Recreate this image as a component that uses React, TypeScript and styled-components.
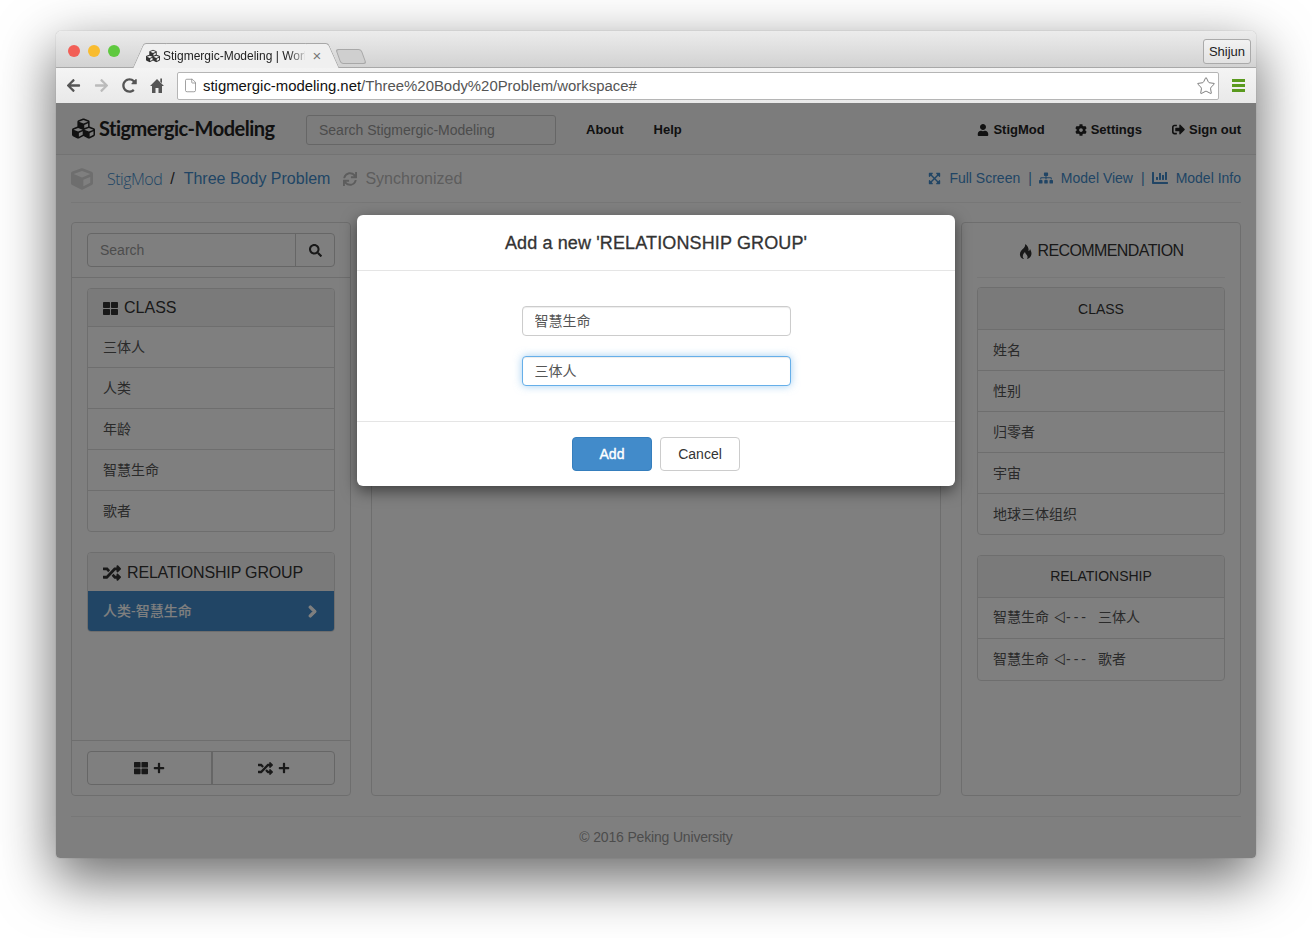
import {FC, ReactNode} from 'react';
import {createGlobalStyle, styled} from 'styled-components';
import {File as FileIcon, Star} from 'lucide-react';
import {
  FaArrowLeft,
  FaArrowRight,
  FaChartBar,
  FaChevronRight,
  FaCog,
  FaCube,
  FaCubes,
  FaExpandArrowsAlt,
  FaPlus,
  FaRandom,
  FaRedoAlt,
  FaSearch,
  FaSignOutAlt,
  FaSitemap,
  FaSync,
  FaThLarge,
  FaUser,
} from 'react-icons/fa';

const sans = `"Liberation Sans", "Noto Sans CJK SC", sans-serif`;
const primary = '#428bca';
const border = '#ddd';

const GlobalStyle = createGlobalStyle`
  html, body {
    margin: 0;
    padding: 0;
    height: 938px;
    overflow: hidden;
    background: #fff;
  }
  body {
    font-family: ${sans};
    font-size: 14px;
    line-height: 20px;
    color: #333;
  }
  * {
    box-sizing: border-box;
  }
`;

const classes = ['三体人', '人类', '年龄', '智慧生命', '歌者'];
const recommended = ['姓名', '性别', '归零者', '宇宙', '地球三体组织'];
const relationships = ['三体人', '歌者'];

const NavLink: FC<{icon?: ReactNode; children: ReactNode}> = ({icon, children}) => (
  <NavItem>
    {icon}
    {children}
  </NavItem>
);

const HomeIcon: FC = () => (
  <svg width="14" height="15" viewBox="0 0 14 15" fill="#555">
    <path d="M7 1 14 8H12V15H8.5V10H5.5V15H2V8H0Z" />
    <path d="M10.3 0.5H12V5.2L10.3 3.5Z" />
  </svg>
);

const FlameIcon: FC = () => (
  <svg width="13" height="15" viewBox="0 0 13 15" fill="currentColor">
    <path d="M6 0C7 3 3.5 5 2 7C.5 9 .5 12 2.5 14C3.5 15 5 15 5 15C3 13 3.5 10.5 6 8C6.3 10 8 10.5 8.5 12.5C8.8 13.5 8 15 8 15C10 14.5 12.5 13 12.5 9.5C12.5 7.5 11.5 6 11 5C10.8 6.5 10 7 9.5 7C10 4 8.5 1.5 6 0Z" />
  </svg>
);

const App: FC = () => (
  <>
    <GlobalStyle />
    <Browser>
      <TitleBar>
        <Lights>
          <Light $color="#f25f57" />
          <Light $color="#f9bc2f" />
          <Light $color="#5fc93f" />
        </Lights>
        <Tab>
          <FaCubes size={14} color="#333" />
          <TabTitle>Stigmergic-Modeling | Worl</TabTitle>
          <TabClose>×</TabClose>
        </Tab>
        <NewTab />
        <Profile>Shijun</Profile>
      </TitleBar>
      <ToolBar>
        <ChromeIcon>
          <FaArrowLeft size={15} color="#555" />
        </ChromeIcon>
        <ChromeIcon>
          <FaArrowRight size={15} color="#bbb" />
        </ChromeIcon>
        <ChromeIcon>
          <FaRedoAlt size={15} color="#555" />
        </ChromeIcon>
        <ChromeIcon>
          <HomeIcon />
        </ChromeIcon>
        <Omnibox>
          <FileIcon size={15} strokeWidth={1.25} color="#888" />
          <Url>
            <strong>stigmergic-modeling.net</strong>/Three%20Body%20Problem/workspace#
          </Url>
          <Star size={20} strokeWidth={1} color="#666" />
        </Omnibox>
        <Hamburger>
          <span />
          <span />
          <span />
        </Hamburger>
      </ToolBar>
      <Page>
        <Navbar>
          <Brand>
            <FaCubes size={23} />
            Stigmergic-Modeling
          </Brand>
          <NavSearch placeholder="Search Stigmergic-Modeling" readOnly />
          <NavLinks>
            <NavLink>About</NavLink>
            <NavLink>Help</NavLink>
          </NavLinks>
          <NavRight>
            <NavLink icon={<FaUser size={12} />}>StigMod</NavLink>
            <NavLink icon={<FaCog size={12} />}>Settings</NavLink>
            <NavLink icon={<FaSignOutAlt size={13} />}>Sign out</NavLink>
          </NavRight>
        </Navbar>
        <Container>
          <Crumbs>
            <CrumbLeft>
              <FaCube size={22} color="#ddd" />
              <CrumbRoot>StigMod</CrumbRoot>
              <CrumbSep>/</CrumbSep>
              <CrumbLink>Three Body Problem</CrumbLink>
              <Sync>
                <FaSync size={14} />
                Synchronized
              </Sync>
            </CrumbLeft>
            <CrumbRight>
              <FaExpandArrowsAlt size={13} />
              <ViewLink>Full Screen</ViewLink>
              <Bar>|</Bar>
              <FaSitemap size={14} />
              <ViewLink>Model View</ViewLink>
              <Bar>|</Bar>
              <FaChartBar size={16} />
              <ViewLink>Model Info</ViewLink>
            </CrumbRight>
          </Crumbs>
          <Columns>
            <Column>
              <SearchRow>
                <SearchGroup>
                  <SearchInput placeholder="Search" readOnly />
                  <SearchButton>
                    <FaSearch size={13} />
                  </SearchButton>
                </SearchGroup>
              </SearchRow>
              <Lists>
                <ListPanel>
                  <ListHeading $height={37}>
                    <FaThLarge size={15} />
                    CLASS
                  </ListHeading>
                  {classes.map(c => (
                    <ListItem key={c}>{c}</ListItem>
                  ))}
                </ListPanel>
                <ListPanel>
                  <ListHeading $height={38}>
                    <FaRandom size={18} />
                    <GroupTitle>RELATIONSHIP GROUP</GroupTitle>
                  </ListHeading>
                  <ActiveItem>
                    人类-智慧生命
                    <FaChevronRight size={13} stroke="currentColor" strokeWidth={50} />
                  </ActiveItem>
                </ListPanel>
              </Lists>
              <AddRow>
                <AddGroup>
                  <AddButton>
                    <FaThLarge size={14} />
                    <FaPlus size={12} />
                  </AddButton>
                  <AddButton>
                    <FaRandom size={15} />
                    <FaPlus size={12} />
                  </AddButton>
                </AddGroup>
              </AddRow>
            </Column>
            <Column />
            <Column>
              <RecommendTitle>
                <FlameIcon />
                <RecommendText>RECOMMENDATION</RecommendText>
              </RecommendTitle>
              <Lists $top={9}>
                <ListPanel>
                  <CenterHeading>CLASS</CenterHeading>
                  {recommended.map(c => (
                    <ListItem key={c}>{c}</ListItem>
                  ))}
                </ListPanel>
                <ListPanel>
                  <CenterHeading $lift>RELATIONSHIP</CenterHeading>
                  {relationships.map((r, i) => (
                    <RelationItem key={r} $first={i === 0}>
                      智慧生命
                      <Arrow>
                        <ArrowHead>◁</ArrowHead>---
                      </Arrow>
                      {r}
                    </RelationItem>
                  ))}
                </ListPanel>
              </Lists>
            </Column>
          </Columns>
          <Footer>© 2016 Peking University</Footer>
        </Container>
        <Backdrop>
          <Modal>
            <ModalHeader>Add a new 'RELATIONSHIP GROUP'</ModalHeader>
            <ModalBody>
              <ModalInput defaultValue="智慧生命" readOnly />
              <ModalInput defaultValue="三体人" readOnly $focused />
            </ModalBody>
            <ModalFooter>
              <AddAction>Add</AddAction>
              <CancelAction>Cancel</CancelAction>
            </ModalFooter>
          </Modal>
        </Backdrop>
      </Page>
    </Browser>
  </>
);
App.displayName = 'App';
export default App;

const Browser = styled.div`
  display: flex;
  flex-direction: column;
  width: 1200px;
  height: 827px;
  margin: 31px 0 0 56px;
  border-radius: 5px 5px 4px 4px;
  overflow: hidden;
  box-shadow: 0 20px 55px 2px rgba(0, 0, 0, 0.58), 0 0 1px rgba(0, 0, 0, 0.4);
`;

const TitleBar = styled.div`
  display: flex;
  align-items: flex-end;
  height: 37px;
  flex-shrink: 0;
  padding-left: 12px;
  background: linear-gradient(#ececec, #d2d2d2);
  border-bottom: 1px solid #a8a8a8;
`;

const Lights = styled.div`
  display: flex;
  gap: 8px;
  align-self: flex-start;
  margin-top: 14px;
`;

const Light = styled.span<{$color: string}>`
  width: 12px;
  height: 12px;
  border-radius: 50%;
  background: ${p => p.$color};
`;

const Tab = styled.div`
  position: relative;
  display: flex;
  align-items: center;
  gap: 3px;
  width: 180px;
  height: 25px;
  margin: 0 0 -1px 26px;
  padding: 0 3px 0 0;
  font-size: 12px;
  color: #222;
  z-index: 0;
  background: #f0f0f0;
  border-top: 1px solid #a8a8a8;
  &::before,
  &::after {
    content: '';
    position: absolute;
    top: -1px;
    bottom: 0;
    width: 22px;
    background: #f0f0f0;
    border-top: 1px solid #a8a8a8;
    z-index: -1;
  }
  &::before {
    left: -8px;
    transform: skewX(-24deg);
    border-left: 1px solid #a8a8a8;
    border-radius: 3px 0 0 0;
  }
  &::after {
    right: -8px;
    transform: skewX(24deg);
    border-right: 1px solid #a8a8a8;
    border-radius: 0 3px 0 0;
  }
  svg {
    flex-shrink: 0;
  }
`;

const TabTitle = styled.span`
  flex: 1;
  min-width: 0;
  white-space: nowrap;
  -webkit-mask-image: linear-gradient(to right, #000 88%, rgba(0, 0, 0, 0.2) 100%);
  mask-image: linear-gradient(to right, #000 88%, rgba(0, 0, 0, 0.2) 100%);
`;

const TabClose = styled.span`
  width: 12px;
  margin-left: 3px;
  font-size: 15px;
  color: #777;
  text-align: center;
`;

const NewTab = styled.div`
  width: 26px;
  height: 15px;
  margin: 0 0 3px 12px;
  background: #cfcfcf;
  border: 1px solid #a8a8a8;
  border-radius: 3px;
  transform: skewX(20deg);
`;

const Profile = styled.div`
  align-self: flex-start;
  display: flex;
  align-items: center;
  justify-content: center;
  width: 48px;
  height: 25px;
  margin: 8px 5px 0 auto;
  font-size: 13px;
  color: #222;
  border: 1px solid #aaa;
  border-radius: 3px;
  background: linear-gradient(#f2f2f2, #e2e2e2);
`;

const ToolBar = styled.div`
  display: flex;
  align-items: center;
  height: 35px;
  flex-shrink: 0;
  padding: 0 11px 0 3px;
  background: linear-gradient(#f4f4f4, #e9e9e9);
`;

const ChromeIcon = styled.div`
  display: flex;
  align-items: center;
  justify-content: center;
  width: 28px;
  height: 28px;
`;

const Omnibox = styled.div`
  display: flex;
  align-items: center;
  flex: 1;
  height: 28px;
  margin: 0 13px 0 6px;
  padding: 0 2px 0 5px;
  background: #fff;
  border: 1px solid #b5b5b5;
  border-radius: 2px;
`;

const Url = styled.div`
  flex: 1;
  margin-left: 5px;
  font-size: 14.9px;
  color: #555;
  white-space: nowrap;
  strong {
    font-weight: 400;
    color: #111;
  }
`;

const Hamburger = styled.div`
  display: flex;
  flex-direction: column;
  gap: 2px;
  width: 13px;
  span {
    height: 3px;
    background: #5a9a1e;
  }
`;

const Page = styled.div`
  position: relative;
  flex: 1;
  background: #fff;
  overflow: hidden;
`;

const Navbar = styled.div`
  display: flex;
  align-items: center;
  height: 52px;
  padding: 2px 15px 0 16px;
  background: #f8f8f8;
  border-bottom: 1px solid #e7e7e7;
`;

const Brand = styled.div`
  display: flex;
  align-items: center;
  gap: 4px;
  width: 234px;
  padding-bottom: 3px;
  font-family: Lato, sans-serif;
  font-size: 20px;
  font-weight: 700;
  letter-spacing: -0.5px;
  color: #222;
`;

const NavSearch = styled.input`
  width: 250px;
  height: 30px;
  padding: 0 12px;
  font-family: ${sans};
  font-size: 14px;
  background: #f8f8f8;
  border: 1px solid #ccc;
  border-radius: 3px;
  outline: none;
  &::placeholder {
    color: #999;
  }
`;

const NavLinks = styled.div`
  display: flex;
  gap: 30px;
  margin-left: 30px;
`;

const NavRight = styled.div`
  display: flex;
  gap: 30px;
  margin-left: auto;
`;

const NavItem = styled.div`
  display: flex;
  align-items: center;
  gap: 4px;
  font-size: 13px;
  font-weight: 700;
  color: #222;
`;

const Container = styled.div`
  padding: 0 15px;
`;

const Crumbs = styled.div`
  display: flex;
  align-items: center;
  justify-content: space-between;
  height: 48px;
  padding-top: 1px;
  border-bottom: 1px solid #eee;
`;

const CrumbLeft = styled.div`
  display: flex;
  align-items: center;
  font-size: 16px;
`;

const CrumbRoot = styled.span`
  margin-left: 14px;
  font-family: "Open Sans", sans-serif;
  font-weight: 300;
  letter-spacing: -0.5px;
  color: ${primary};
`;

const CrumbSep = styled.span`
  margin: 0 8px;
  color: #333;
`;

const CrumbLink = styled.span`
  margin-left: 1px;
  color: ${primary};
`;

const Sync = styled.span`
  display: flex;
  align-items: center;
  gap: 8px;
  margin-left: 13px;
  color: #bbb;
`;

const CrumbRight = styled.div`
  display: flex;
  align-items: center;
  gap: 7px;
  padding-bottom: 2px;
  color: ${primary};
`;

const ViewLink = styled.span`
  margin-left: 1px;
  color: ${primary};
`;

const Bar = styled.span`
  margin: 0 0 0 1px;
  color: ${primary};
`;

const Columns = styled.div`
  display: grid;
  grid-template-columns: 280px 570px 280px;
  gap: 20px;
  height: 574px;
  margin-top: 19px;
`;

const Column = styled.div`
  display: flex;
  flex-direction: column;
  border: 1px solid ${border};
  border-radius: 4px;
`;

const SearchRow = styled.div`
  height: 55px;
  flex-shrink: 0;
  padding: 10px 15px;
  border-bottom: 1px solid ${border};
`;

const SearchGroup = styled.div`
  display: flex;
  height: 34px;
  border: 1px solid #ccc;
  border-radius: 4px;
`;

const SearchInput = styled.input`
  flex: 1;
  min-width: 0;
  padding: 0 12px;
  font-family: ${sans};
  font-size: 14px;
  background: transparent;
  border: 0;
  outline: none;
  &::placeholder {
    color: #999;
  }
`;

const SearchButton = styled.div`
  display: flex;
  align-items: center;
  justify-content: center;
  width: 39px;
  border-left: 1px solid #ccc;
  color: #333;
`;

const Lists = styled.div<{$top?: number}>`
  display: flex;
  flex-direction: column;
  flex: 1;
  gap: 20px;
  padding: ${p => p.$top ?? 10}px 15px 0;
`;

const ListPanel = styled.div`
  border: 1px solid ${border};
  border-radius: 4px;
  overflow: hidden;
`;

const ListHeading = styled.div<{$height: number}>`
  display: flex;
  align-items: center;
  gap: 6px;
  height: ${p => p.$height}px;
  padding: 1px 15px 0;
  font-size: 16px;
  color: #333;
  background: #f5f5f5;
`;

const GroupTitle = styled.span`
  letter-spacing: -0.17px;
`;

const CenterHeading = styled.div<{$lift?: boolean}>`
  display: flex;
  align-items: center;
  justify-content: center;
  height: 41px;
  padding-bottom: ${p => (p.$lift ? 2 : 0)}px;
  color: #333;
  background: #f5f5f5;
`;

const ListItem = styled.div`
  height: 41px;
  padding: 10px 15px;
  color: #555;
  border-top: 1px solid ${border};
`;

const RelationItem = styled(ListItem)<{$first: boolean}>`
  height: ${p => (p.$first ? 41 : 42)}px;
  padding-top: ${p => (p.$first ? 9 : 10)}px;
`;

const ActiveItem = styled.div`
  display: flex;
  align-items: center;
  justify-content: space-between;
  height: 40px;
  padding: 0 15px;
  font-weight: 500;
  color: #fff;
  background: ${primary};
`;

const Arrow = styled.span`
  margin: 0 9px 0 5px;
  letter-spacing: 3px;
`;

const ArrowHead = styled.span`
  font-size: 12px;
  letter-spacing: 0;
  -webkit-text-stroke: 0.3px #555;
`;

const AddRow = styled.div`
  height: 55px;
  flex-shrink: 0;
  padding: 10px 15px;
  border-top: 1px solid ${border};
`;

const AddGroup = styled.div`
  display: grid;
  grid-template-columns: 1fr 1fr;
  height: 34px;
  border: 1px solid #ccc;
  border-radius: 4px;
`;

const AddButton = styled.div`
  display: flex;
  align-items: center;
  justify-content: center;
  gap: 5px;
  color: #333;
  & + & {
    border-left: 2px solid #ccc;
  }
`;

const RecommendTitle = styled.div`
  display: flex;
  align-items: center;
  justify-content: center;
  gap: 6px;
  height: 55px;
  flex-shrink: 0;
  margin: 0 15px;
  padding-top: 2px;
  font-size: 16px;
  color: #333;
  border-bottom: 1px solid #eee;
`;

const RecommendText = styled.span`
  letter-spacing: -0.6px;
`;

const Footer = styled.div`
  height: 42px;
  margin-top: 20px;
  font-size: 14px;
  line-height: 41px;
  letter-spacing: -0.17px;
  text-align: center;
  color: #999;
  border-top: 1px solid #eee;
`;

const Backdrop = styled.div`
  position: absolute;
  inset: 0;
  display: flex;
  justify-content: center;
  align-items: flex-start;
  padding-top: 112px;
  background: rgba(0, 0, 0, 0.5);
`;

const Modal = styled.div`
  width: 598px;
  height: 271px;
  background: #fff;
  border-radius: 6px;
  box-shadow: 0 5px 15px rgba(0, 0, 0, 0.5);
`;

const ModalHeader = styled.div`
  height: 56px;
  font-size: 18px;
  line-height: 57px;
  letter-spacing: 0.13px;
  text-align: center;
  color: #333;
  border-bottom: 1px solid #e5e5e5;
  -webkit-text-stroke: 0.3px #333;
`;

const ModalBody = styled.div`
  display: flex;
  flex-direction: column;
  align-items: center;
  gap: 20px;
  height: 151px;
  padding-top: 35px;
  border-bottom: 1px solid #e5e5e5;
`;

const ModalInput = styled.input<{$focused?: boolean}>`
  width: 269px;
  height: 30px;
  padding: 0 11px 2px 12px;
  font-family: ${sans};
  font-size: 14px;
  color: #555;
  background: #fff;
  border: 1px solid ${p => (p.$focused ? '#66afe9' : '#ccc')};
  border-radius: 4px;
  outline: none;
  box-shadow: ${p =>
    p.$focused
      ? 'inset 0 1px 1px rgba(0, 0, 0, 0.075), 0 0 8px rgba(102, 175, 233, 0.6)'
      : 'inset 0 1px 1px rgba(0, 0, 0, 0.075)'};
`;

const ModalFooter = styled.div`
  display: flex;
  justify-content: center;
  gap: 8px;
  padding-top: 15px;
`;

const AddAction = styled.button`
  width: 80px;
  height: 34px;
  padding: 0;
  font-family: ${sans};
  font-size: 14px;
  font-weight: 400;
  color: #fff;
  background: ${primary};
  border: 1px solid #357ebd;
  border-radius: 4px;
  -webkit-text-stroke: 0.4px #fff;
`;

const CancelAction = styled.button`
  width: 80px;
  height: 34px;
  padding: 0;
  font-family: ${sans};
  font-size: 14px;
  color: #333;
  background: #fff;
  border: 1px solid #ccc;
  border-radius: 4px;
`;
